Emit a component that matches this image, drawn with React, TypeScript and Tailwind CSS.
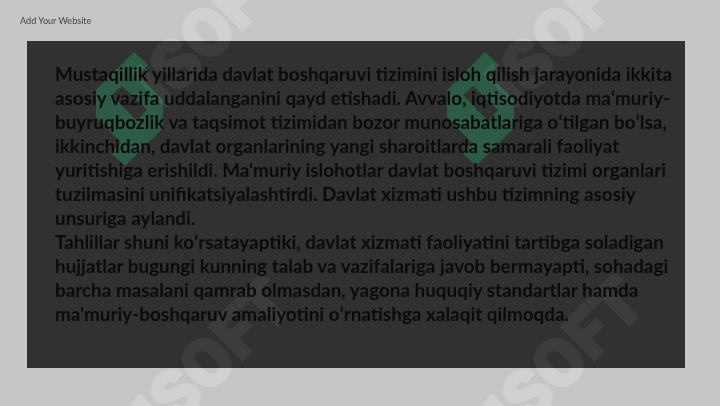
const LINES = [
  'Mustaqillik yillarida davlat boshqaruvi tizimini isloh qilish jarayonida ikkita',
  'asosiy vazifa uddalanganini qayd etishadi. Avvalo, iqtisodiyotda maʻmuriy-',
  'buyruqbozlik va taqsimot tizimidan bozor munosabatlariga oʻtilgan boʻlsa,',
  'ikkinchidan, davlat organlarining yangi sharoitlarda samarali faoliyat',
  "yuritishiga erishildi. Ma'muriy islohotlar davlat boshqaruvi tizimi organlari",
  'tuzilmasini unifikatsiyalashtirdi. Davlat xizmati ushbu tizimning asosiy',
  'unsuriga aylandi.',
  'Tahlillar shuni koʻrsatayaptiki, davlat xizmati faoliyatini tartibga soladigan',
  'hujjatlar bugungi kunning talab va vazifalariga javob bermayapti, sohadagi',
  'barcha masalani qamrab olmasdan, yagona huquqiy standartlar hamda',
  "ma'muriy-boshqaruv amaliyotini oʻrnatishga xalaqit qilmoqda.",
];

function Logo({ className }: { className: string }) {
  return (
    <svg className={`absolute top-[51px] w-[67px] h-[116px] ${className}`} viewBox="0 0 67 116" fill="#2c5c45" fillRule="evenodd">
      <path d="M38 1 L52 14 L42 24 L67 49 L67 77 L29 115 L15 102 L25 92 L0 66 L0 39 Z M16 44 L26 35 L51 59 L41 70 Z" />
    </svg>
  );
}

function Mark({ className }: { className: string }) {
  return (
    <div className={`absolute -rotate-45 text-[66px] leading-none font-black tracking-[1px] text-[#0b0b0b] [-webkit-text-stroke:3px_#0b0b0b] mix-blend-plus-lighter font-['Roboto',sans-serif] ${className}`}>
      ISOFT
    </div>
  );
}

export default function App() {
  return (
    <div className="relative flex flex-col w-[720px] h-[406px] overflow-hidden bg-[#c6c6c6] font-['Lato',sans-serif]">
      <div className="pl-5 pt-[15px] text-[9.1px] leading-[11px] text-[#444444]">Add Your Website</div>
      <div className="mt-[15px] ml-[27px] w-[658px] h-[327px] bg-[#313131] pl-[28px] pt-[21px]">
        <Logo className="left-[96px]" />
        <Logo className="left-[447px]" />
        <Mark className="left-[119px] top-[-6px]" />
        <Mark className="left-[471px] top-[-6px]" />
        <Mark className="left-[119px] top-[324px]" />
        <Mark className="left-[471px] top-[324px]" />
        <div className="relative flex flex-col">
          {LINES.map(line => (
            <div key={line} className="text-[18.87px] leading-[24px] font-bold whitespace-nowrap text-[#0b0b0b]">
              {line}
            </div>
          ))}
        </div>
      </div>
    </div>
  );
}
